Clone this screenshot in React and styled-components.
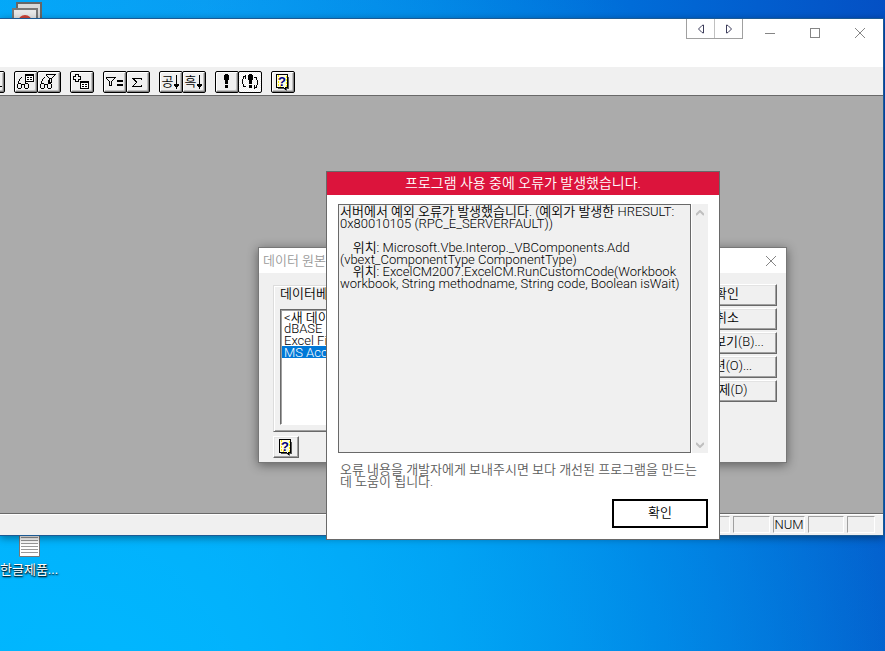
import React from "react";
import styled, { createGlobalStyle, css } from "styled-components";

const FONT = `Roboto, "Noto Sans CJK KR", sans-serif`;

const GlobalStyle = createGlobalStyle`
  * { box-sizing: border-box; }
  body {
    margin: 0;
    overflow: hidden;
    font-family: ${FONT};
    font-size: 13px;
    font-weight: 350;
    line-height: 12px;
    color: #000;
  }
  button, select, textarea, option { font: inherit; color: inherit; }
`;

const Desktop = styled.main`
  position: relative;
  min-height: 100vh;
  overflow: hidden;
  background:
    radial-gradient(ellipse at 10% 110%, #00b8ff 0%, rgba(0, 184, 255, 0.6) 35%, transparent 85%),
    linear-gradient(88deg, #04a6f8 0%, #0a98f0 25%, #0284e4 50%, #006cd8 72%, #0450c4 100%);
`;

const DesktopIcon = styled.div`
  position: absolute;
  left: ${(p) => p.$left}px;
  top: ${(p) => p.$top}px;
  display: flex;
  flex-direction: column;
  align-items: center;
  gap: 7px;
  color: #fff;
  font-weight: 400;
  white-space: nowrap;
  text-shadow: 1px 1px 2px #000, 0 1px 1px rgba(0, 0, 0, 0.6);
`;

const MainWindow = styled.section`
  position: absolute;
  top: 18px;
  left: 0;
  right: 1px;
  height: 518px;
  display: flex;
  flex-direction: column;
  background: #ababab;
  border: solid #1c5a94;
  border-width: 1px 1px 1px 0;
  box-shadow: 0 2px 8px rgba(0, 0, 0, 0.4);
`;

const TitleBar = styled.header`
  display: flex;
  justify-content: flex-end;
  align-items: flex-start;
  height: 48px;
  padding-right: 1px;
  background: #fff;
`;

const PageNav = styled.div`
  display: flex;
  width: 57px;
  height: 20px;
  margin-right: 4px;
  border: 1px solid #a0a0a0;
  border-top: 0;
`;

const PageButton = styled.button`
  display: grid;
  place-items: center;
  flex: 1;
  padding: 0;
  border: 0;
  background: none;

  & + & {
    border-left: 1px solid #c0c0c0;
  }
`;

const CaptionButton = styled.button`
  display: grid;
  place-items: center;
  width: 45px;
  height: 28px;
  padding: 0;
  border: 0;
  background: none;
`;

const Toolbar = styled.div`
  display: flex;
  gap: 9px;
  height: 29px;
  padding-top: 4px;
  background: #f0f0f0;
  border-bottom: 1px solid #696969;
`;

const ToolGroup = styled.div`
  display: flex;
  ${(p) => p.$clipped && "margin-left: -19px;"}
`;

const ToolButton = styled.button`
  display: flex;
  align-items: center;
  justify-content: center;
  width: 24px;
  height: 22px;
  padding: 0;
  border: 1px solid #000;
  border-radius: 2px;
  background: #f0f0f0;
  box-shadow: inset 1px 1px #fff, inset -1px -1px #808080, inset -2px -2px #c0c0c0;

  & + & {
    margin-left: -1px;
  }

  ${(p) =>
    p.$pressed &&
    css`
      background: repeating-conic-gradient(#fff 0 25%, #f0f0f0 0 50%) 0 0 / 2px 2px;
      box-shadow: none;
    `}
`;

const SortGlyph = styled.span`
  font-size: 13px;
  line-height: 18px;
`;

const Workspace = styled.div`
  flex: 1;
`;

const StatusBar = styled.footer`
  display: flex;
  justify-content: flex-end;
  gap: 3px;
  height: 22px;
  padding: 2px 8px 2px 0;
  background: #f0f0f0;
  border-top: 1px solid #696969;
  box-shadow: inset 0 1px #fff;
`;

const StatusPane = styled.div`
  width: ${(p) => p.$width}px;
  border: 1px solid;
  border-color: #a0a0a0 #fff #fff #a0a0a0;
  line-height: 16px;
  text-align: center;
`;

const SourceDialog = styled.section`
  position: absolute;
  left: 258px;
  top: 247px;
  width: 529px;
  background: #f0f0f0;
  border: 1px solid #777;
  box-shadow: 0 2px 10px rgba(0, 0, 0, 0.45);
`;

const SourceTitle = styled.header`
  display: flex;
  align-items: center;
  justify-content: space-between;
  height: 25px;
  padding-left: 4px;
  background: #fff;
  color: #999;
`;

const SourceClose = styled(CaptionButton)`
  width: 30px;
  height: 24px;
`;

const SourceBody = styled.div`
  display: flex;
  justify-content: space-between;
  padding: 12px 9px 4px 14px;
`;

const SourceLeft = styled.div`
  display: flex;
  flex-direction: column;
  align-items: flex-start;
  gap: 4px;
`;

const Group = styled.div`
  width: 380px;
  padding: 2px 6px 6px;
  border: 1px solid;
  border-color: #dcdcdc #696969 #696969 #dcdcdc;
  box-shadow: inset 1px 1px #fff, inset -1px -1px #a0a0a0;
`;

const GroupLabel = styled.label`
  display: block;
  margin-bottom: 9px;
`;

const SourceList = styled.select`
  display: block;
  width: 100%;
  height: 116px;
  padding: 0 1px;
  overflow: hidden;
  border: 1px solid;
  border-color: #696969 #fff #fff #696969;
  border-radius: 0;
  outline: 0;
  background: #fff;
  box-shadow: inset 1px 1px #a0a0a0;

  option {
    display: flex;
    align-items: center;
    height: 12px;
    min-height: 0;
    padding: 0 2px;
  }

  option:checked {
    background: #0078d7 linear-gradient(#0078d7, #0078d7);
    color: #fff;
  }
`;

const RaisedButton = styled.button`
  display: grid;
  place-items: center;
  width: ${(p) => p.$width}px;
  height: 22px;
  padding: 0 0 3px;
  border: 1px solid;
  border-color: #fff #696969 #696969 #fff;
  background: #f0f0f0;
  box-shadow: inset -1px -1px #a0a0a0, inset 1px 1px #e3e3e3;
`;

const HelpButton = styled(RaisedButton)`
  padding: 0;
`;

const ButtonColumn = styled.div`
  display: flex;
  flex-direction: column;
  gap: 2px;
  margin-top: -1px;
`;

const ErrorDialog = styled.section`
  position: absolute;
  left: 326px;
  top: 171px;
  width: 394px;
  background: #fff;
  border: 1px solid #696969;
`;

const ErrorTitle = styled.h1`
  height: 23px;
  margin: 0;
  background: #dc143c;
  color: #fff;
  font-size: 14px;
  font-weight: 350;
  line-height: 22px;
  text-align: center;
`;

const ErrorBody = styled.div`
  display: flex;
  flex-direction: column;
  padding: 9px 11px 11px;
`;

const MessageRow = styled.div`
  display: flex;
  gap: 1px;
  height: 249px;
`;

const Message = styled.textarea`
  flex: 1;
  padding: 1px;
  border: 1px solid #696969;
  border-radius: 0;
  outline: 0;
  resize: none;
  overflow: hidden;
  background: #f0f0f0;
  white-space: pre;
`;

const ScrollTrack = styled.div`
  display: flex;
  flex-direction: column;
  justify-content: space-between;
  width: 16px;
  background: #f0f0f0;
`;

const ScrollButton = styled.button`
  display: grid;
  place-items: center;
  height: 17px;
  padding: 0;
  border: 0;
  background: none;
`;

const Hint = styled.p`
  margin: 11px 0;
  padding: 0 2px;
  color: #5c5c5c;
  white-space: pre;
`;

const OkButton = styled.button`
  align-self: flex-end;
  width: 96px;
  height: 29px;
  padding: 0 0 2px;
  border: 2px solid #000;
  background: #fff;
`;

const ERROR_TEXT = `서버에서 예외 오류가 발생했습니다. (예외가 발생한 HRESULT:
0x80010105 (RPC_E_SERVERFAULT))

    위치: Microsoft.Vbe.Interop._VBComponents.Add
(vbext_ComponentType ComponentType)
    위치: ExcelCM2007.ExcelCM.RunCustomCode(Workbook
workbook, String methodname, String code, Boolean isWait)`;

const Icon = ({ w = 20, h = 18, children }) => (
  <svg width={w} height={h} viewBox={`0 0 ${w} ${h}`} fill="none" stroke="#000" shapeRendering="crispEdges" aria-hidden="true">
    {children}
  </svg>
);

const Glasses = () => (
  <>
    <path d="M1.500 11v4M2 10.500h3M2 15.500h3M5.500 11v4M5.500 12l1-1h1l1 1M8.500 11v4M9 10.500h3M9 15.500h3M12.500 11v4" />
    <path d="M2.500 10V8.500l1-1v-1l2-2M9.500 10V8l1-1V6l1-1" />
  </>
);

const TableIcon = ({ x, y }) => (
  <g transform={`translate(${x} ${y})`}>
    <path d="M.5.5h8v7h-8zM0 1.500h9" fill="#fff" />
    <path d="M2 3.500h2M5 3.500h2M2 5.500h2M5 5.500h2" />
  </g>
);

const FunnelIcon = ({ x, y }) => (
  <g transform={`translate(${x} ${y})`}>
    <path d="M0 .5h10M.5 1.500l3 3v4h2v-4l4-4" />
  </g>
);

const DownArrow = () => (
  <Icon w={7} h={14}>
    <path d="M3.500 0v10" />
    <path d="M1 9h5v1l-2.500 4L1 10z" fill="#000" stroke="none" />
  </Icon>
);

const Exclamation = ({ x = 0 }) => (
  <g transform={`translate(${x} 0)`} fill="#000" stroke="none">
    <path d="M1 1h3v1h1v5H4v4H1V7H0V2h1zM1 12h3v3H1z" />
  </g>
);

const HelpIcon = () => (
  <svg width="16" height="17" viewBox="0 0 16 17" aria-hidden="true">
    <path d="M3 3h11v12h-2v2l-3-2H3z" fill="#555" />
    <path d="M1.500.5h11v13h-2v2l-2-2h-7z" fill="#fffde0" stroke="#000" shapeRendering="crispEdges" />
    <path d="M3 2h1M3 5h1M3 8h1M3 11h1M11 3h1M11 6h1M11 9h1M11 12h1M5 12h1" stroke="#ffee00" strokeWidth="2" />
    <text x="7" y="12" textAnchor="middle" fill="#000080" fontFamily="Liberation Sans" fontSize="13" fontWeight="700">?</text>
  </svg>
);

const CloseIcon = () => (
  <svg width="12" height="12" viewBox="0 0 12 12" stroke="#858585" aria-hidden="true">
    <path d="M1 1l10 10M11 1L1 11" />
  </svg>
);

const Chevron = ({ up }) => (
  <svg width="8" height="6" viewBox="0 0 8 6" fill="none" stroke="#bfbfbf" strokeWidth="2" aria-hidden="true">
    <path d={up ? "M0 5l4-4 4 4" : "M0 1l4 4 4-4"} />
  </svg>
);

const SOURCE_BUTTONS = ["확인", "취소", "찾아보기(B)...", "옵션(O)...", "삭제(D)"];

function QueryWindow() {
  return (
    <MainWindow>
      <TitleBar>
        <PageNav>
          <PageButton aria-label="이전">
            <svg width="8" height="10" viewBox="0 0 8 10" fill="none" stroke="#3c3c5a"><path d="M6.500 1v8L5 8.500 1.500 5 5 1.500z" /></svg>
          </PageButton>
          <PageButton aria-label="다음">
            <svg width="8" height="10" viewBox="0 0 8 10" fill="none" stroke="#3c3c5a"><path d="M1.500 1v8L3 8.500 6.500 5 3 1.500z" /></svg>
          </PageButton>
        </PageNav>
        <CaptionButton aria-label="최소화">
          <Icon w={10} h={10}><path d="M0 5.500h10" stroke="#858585" /></Icon>
        </CaptionButton>
        <CaptionButton aria-label="최대화">
          <Icon w={10} h={10}><path d="M.5.5h9v9h-9z" stroke="#858585" /></Icon>
        </CaptionButton>
        <CaptionButton aria-label="닫기"><CloseIcon /></CaptionButton>
      </TitleBar>
      <Toolbar>
        <ToolGroup $clipped>
          <ToolButton aria-label="SQL"><Icon><path d="M16 13.500h3" /></Icon></ToolButton>
        </ToolGroup>
        <ToolGroup>
          <ToolButton aria-label="테이블 표시"><Icon><Glasses /><TableIcon x={9} y={1} /></Icon></ToolButton>
          <ToolButton aria-label="조건 표시"><Icon><Glasses /><FunnelIcon x={7} y={1} /></Icon></ToolButton>
        </ToolGroup>
        <ToolGroup>
          <ToolButton aria-label="테이블 추가">
            <Icon>
              <path d="M3.500 1.500h3v2h2v3h-2v2h-3v-2h-2v-3h2z" />
              <TableIcon x={8} y={8} />
            </Icon>
          </ToolButton>
        </ToolGroup>
        <ToolGroup>
          <ToolButton aria-label="조건 추가">
            <Icon><FunnelIcon x={1} y={4} /><path d="M12 8h6M12 12h6" strokeWidth="2" /></Icon>
          </ToolButton>
          <ToolButton aria-label="합계">
            <Icon><path d="M13.500 7V5.500h-9l4 4-4 4h9V12M5 6.500h2M6 7.500h2M7 8.500h2" /></Icon>
          </ToolButton>
        </ToolGroup>
        <ToolGroup>
          <ToolButton><SortGlyph>공</SortGlyph><DownArrow /></ToolButton>
          <ToolButton><SortGlyph>흑</SortGlyph><DownArrow /></ToolButton>
        </ToolGroup>
        <ToolGroup>
          <ToolButton aria-label="쿼리 실행"><Icon><Exclamation x={7} /></Icon></ToolButton>
          <ToolButton $pressed aria-label="자동 쿼리">
            <Icon>
              <Exclamation x={8} />
              <path d="M5 3.500H3.500v2l-1 1v4l1 1v2H6M5.500 2v4M15 14.500h1.500v-2l1-1v-4l-1-1v-2H14M14.500 12v4" />
            </Icon>
          </ToolButton>
        </ToolGroup>
        <ToolGroup>
          <ToolButton aria-label="도움말"><HelpIcon /></ToolButton>
        </ToolGroup>
      </Toolbar>
      <Workspace />
      <StatusBar>
        <StatusPane $width={36} />
        <StatusPane $width={37} />
        <StatusPane $width={32}>NUM</StatusPane>
        <StatusPane $width={36} />
        <StatusPane $width={28} />
      </StatusBar>
    </MainWindow>
  );
}

function DataSourceDialog() {
  return (
    <SourceDialog>
      <SourceTitle>
        <span>데이터 원본 선택</span>
        <SourceClose aria-label="닫기"><CloseIcon /></SourceClose>
      </SourceTitle>
      <SourceBody>
        <SourceLeft>
          <Group>
            <GroupLabel htmlFor="sources">데이터베이스</GroupLabel>
            <SourceList id="sources" size={9} defaultValue="access">
              <option value="new">&lt;새 데이터 원본&gt;</option>
              <option value="dbase">dBASE Files*</option>
              <option value="excel">Excel Files*</option>
              <option value="access">MS Access Database*</option>
            </SourceList>
          </Group>
          <HelpButton $width={26} aria-label="도움말"><HelpIcon /></HelpButton>
        </SourceLeft>
        <ButtonColumn>
          {SOURCE_BUTTONS.map((label) => (
            <RaisedButton key={label} $width={100}>{label}</RaisedButton>
          ))}
        </ButtonColumn>
      </SourceBody>
    </SourceDialog>
  );
}

function ServerErrorDialog() {
  return (
    <ErrorDialog role="alertdialog" aria-labelledby="error-title">
      <ErrorTitle id="error-title">프로그램 사용 중에 오류가 발생했습니다.</ErrorTitle>
      <ErrorBody>
        <MessageRow>
          <Message readOnly aria-labelledby="error-title" defaultValue={ERROR_TEXT} />
          <ScrollTrack>
            <ScrollButton aria-label="위로"><Chevron up /></ScrollButton>
            <ScrollButton aria-label="아래로"><Chevron /></ScrollButton>
          </ScrollTrack>
        </MessageRow>
        <Hint>{"오류 내용을 개발자에게 보내주시면 보다 개선된 프로그램을 만드는\n데 도움이 됩니다."}</Hint>
        <OkButton>확인</OkButton>
      </ErrorBody>
    </ErrorDialog>
  );
}

export default function App() {
  return (
    <>
      <GlobalStyle />
      <Desktop>
        <DesktopIcon $left={12} $top={2}>
          <svg width="30" height="26" viewBox="0 0 30 26" aria-hidden="true">
            <path d="M5 1h24v22H5z" fill="#d8d8d8" stroke="#666" strokeWidth="2" />
            <path d="M1 7h24v19H1z" fill="#e8e8e8" stroke="#777" strokeWidth="2" />
            <circle cx="13" cy="20" r="7" fill="#d04438" />
          </svg>
        </DesktopIcon>
        <DesktopIcon $left={0} $top={530}>
          <svg width="21" height="27" viewBox="0 0 21 27" aria-hidden="true">
            <path d="M.5.5h20v26H.5z" fill="#fff" stroke="#777" />
            <path d="M2 7.500h17M2 10.500h17M2 13.500h17M2 16.500h17M2 19.500h17M2 22.500h17" stroke="#999" />
          </svg>
          <span>한글제품...</span>
        </DesktopIcon>
        <QueryWindow />
        <DataSourceDialog />
        <ServerErrorDialog />
      </Desktop>
    </>
  );
}
